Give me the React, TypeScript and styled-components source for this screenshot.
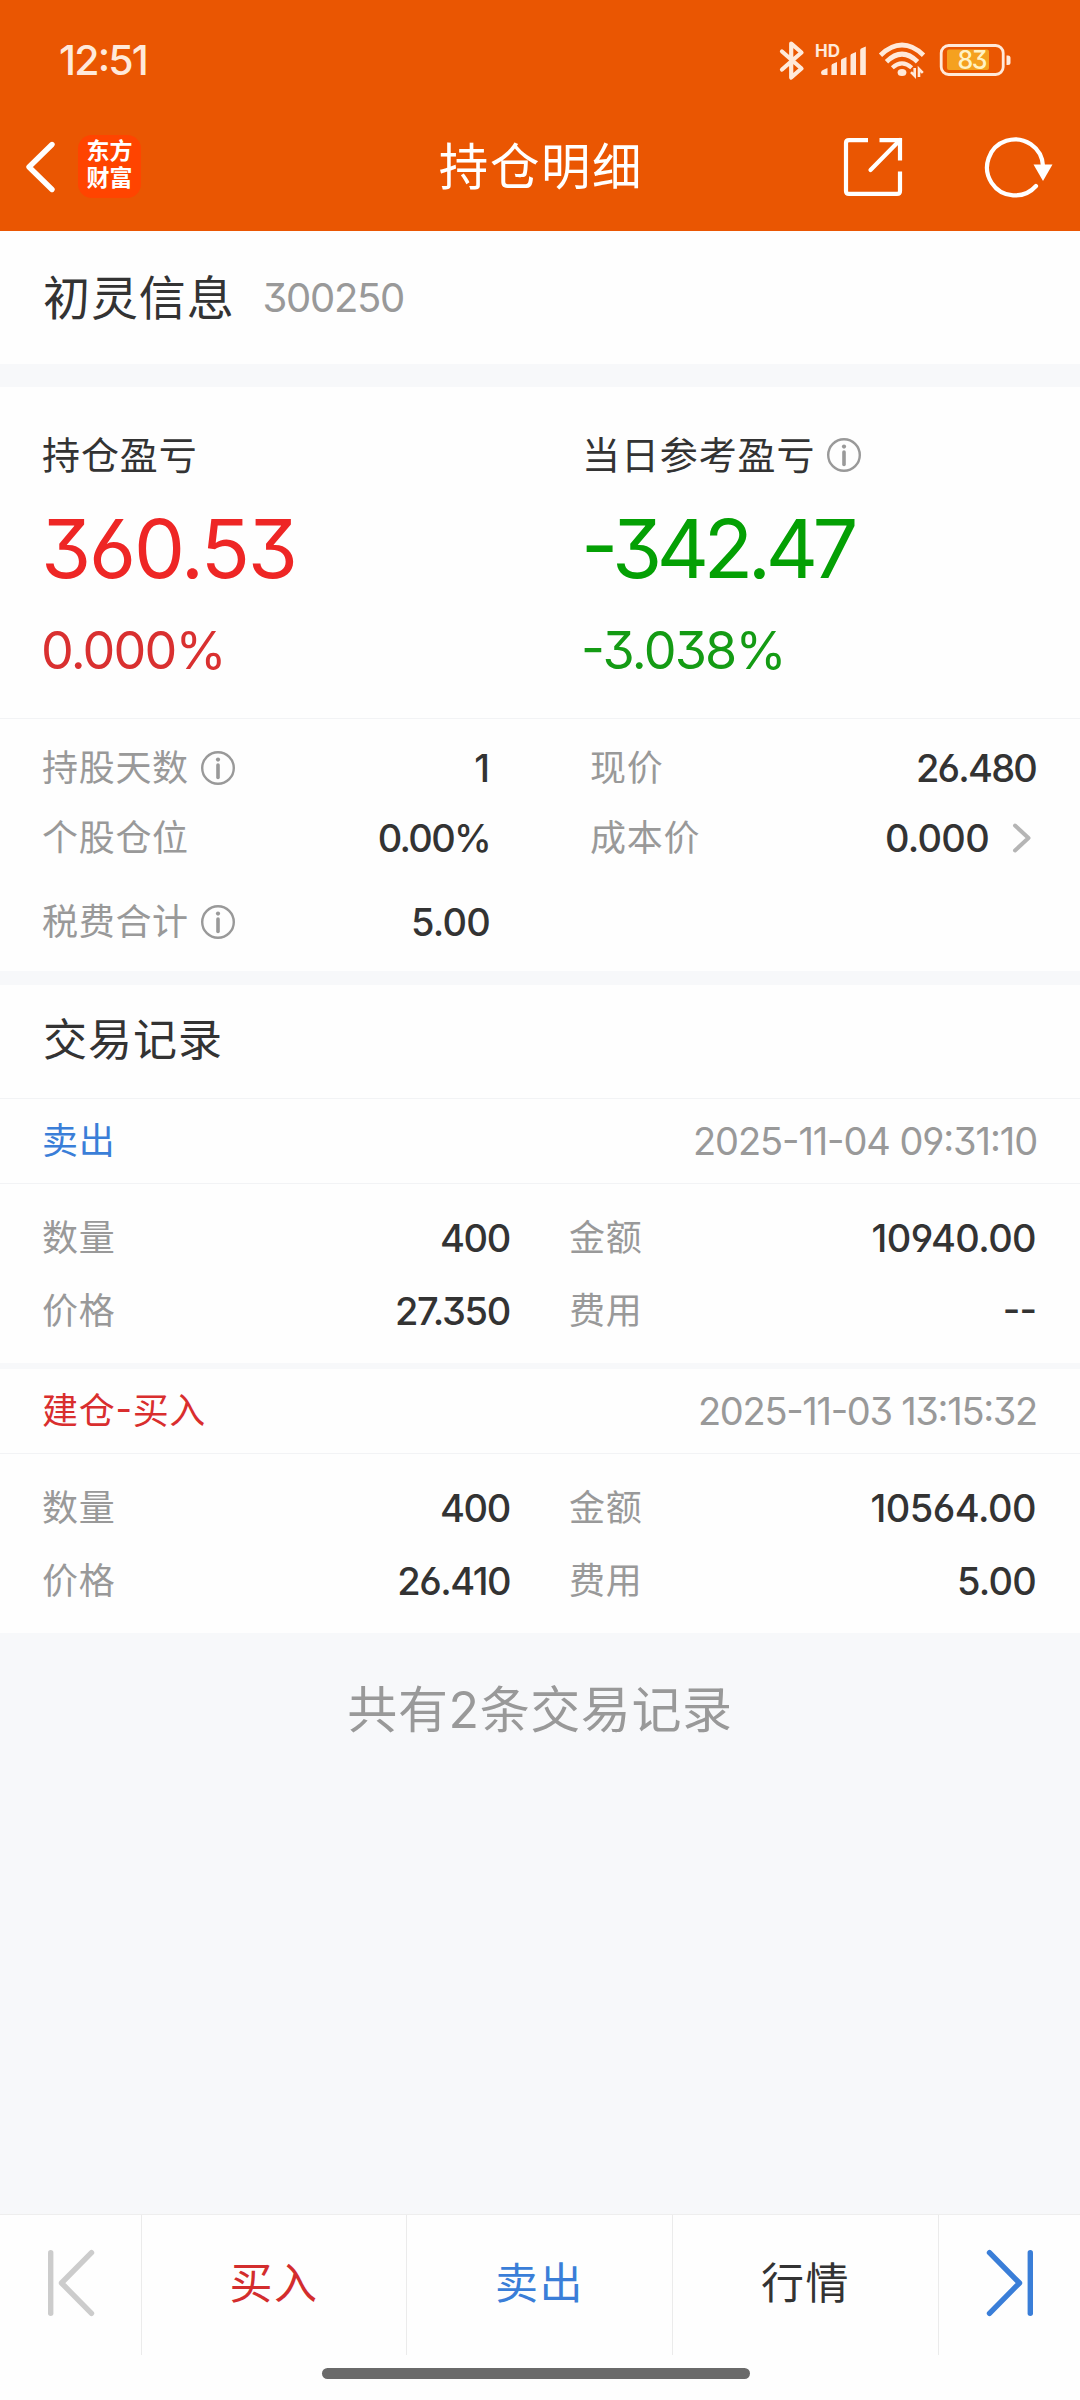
import React from "react";
import styled, { createGlobalStyle } from "styled-components";

const GlobalStyle = createGlobalStyle`
  * { box-sizing: border-box; }
  html, body { margin: 0; padding: 0; background: #f7f8fa; }
  body {
    font-family: Inter, "Noto Sans CJK SC", sans-serif;
    font-feature-settings: "cv03", "cv04", "cv09", "case";
    color: #333;
  }
`;

const Page = styled.div`
  width: 1080px;
  height: 2400px;
  display: flex;
  flex-direction: column;
  background: #f7f8fa;
  overflow: hidden;
`;

const Header = styled.header`
  height: 231px;
  background: #ea5602;
  color: #fff;
`;

const StatusBar = styled.div`
  height: 104px;
  padding: 16px 69px 0 59px;
  display: flex;
  align-items: center;
  justify-content: space-between;
`;

const Clock = styled.span`
  font-size: 41px;
  font-weight: 500;
  line-height: 48px;
  letter-spacing: -1.8px;
  color: #ffe9da;
`;

const StatusIcons = styled.div`
  display: flex;
  align-items: center;
  height: 48px;
`;

const Icon = styled.svg<{ $ml?: number }>`
  display: block;
  flex: none;
  overflow: visible;
  margin-left: ${(p) => p.$ml ?? 0}px;
`;

const NavBar = styled.div`
  height: 125px;
  display: grid;
  grid-template-columns: 1fr auto 1fr;
  align-items: center;
`;

const NavLeft = styled.div`
  display: flex;
  align-items: center;
  padding-left: 25px;
`;

const NavRight = styled.div`
  display: flex;
  align-items: center;
  justify-content: flex-end;
  padding-right: 28px;
`;

const BrandTile = styled.div`
  width: 63px;
  height: 63px;
  margin-left: 22px;
  border-radius: 14px;
  background: #ff4400;
  display: flex;
  flex-direction: column;
  align-items: center;
  justify-content: center;
  font-size: 23px;
  font-weight: 700;
  line-height: 27px;
  padding-bottom: 3px;
`;

const Title = styled.h1`
  margin: 0;
  padding-left: 2px;
  font-size: 49.5px;
  font-weight: 400;
  line-height: 60px;
  letter-spacing: 1.6px;
`;

const Panel = styled.section<{ $h: number; $gap?: number }>`
  height: ${(p) => p.$h}px;
  margin-bottom: ${(p) => p.$gap ?? 0}px;
  background: #fefefe;
  flex: none;
`;

const StockLine = styled(Panel)`
  display: flex;
  align-items: center;
  padding-left: 43px;
`;

const StockName = styled.span`
  font-size: 47px;
  line-height: 56px;
  letter-spacing: 0.9px;
`;

const StockCode = styled.span`
  margin-left: 28px;
  font-size: 40px;
  line-height: 56px;
  letter-spacing: -1.3px;
  color: #999;
`;

const Profits = styled.div`
  height: 332px;
  display: grid;
  grid-template-columns: 540px 540px;
  border-bottom: 1px solid #f2f3f5;
`;

const ProfitCell = styled.div<{ $tone: "up" | "down" }>`
  padding: 42px 0 0 42px;
  color: ${(p) => (p.$tone === "up" ? "#ee2625" : "#04a004")};
`;

const ProfitLabel = styled.div`
  display: flex;
  align-items: center;
  height: 46px;
  font-size: 38px;
  letter-spacing: 0.9px;
  color: #333;
  svg { position: relative; top: 3px; }
`;

const ProfitValue = styled.div<{ $track: number }>`
  margin: 25px 0 0 -1px;
  font-size: 81px;
  line-height: 98px;
  letter-spacing: ${(p) => p.$track}px;
`;

const ProfitRate = styled.div<{ $tone: "up" | "down" }>`
  margin: 23px 0 0 -1px;
  font-size: 52px;
  line-height: 60px;
  letter-spacing: -1.8px;
  color: ${(p) => (p.$tone === "up" ? "#d93030" : "#149b14")};
`;

const Stats = styled.div`
  display: grid;
  grid-template-rows: 70px 70px 98px;
  grid-template-columns: 448px 446px;
  justify-content: space-between;
  padding: 14px 44px 0 42px;
`;

const Pair = styled.div`
  display: flex;
  align-items: center;
  justify-content: space-between;
`;

const Label = styled.span`
  display: flex;
  align-items: center;
  font-size: 36px;
  line-height: 44px;
  letter-spacing: 0.7px;
  color: #999;
`;

const Value = styled.span<{ $track?: number }>`
  display: flex;
  align-items: center;
  font-size: 38px;
  font-weight: 450;
  line-height: 44px;
  letter-spacing: ${(p) => p.$track ?? 0}px;
  color: #333;
`;

const SectionTitle = styled.h2`
  margin: 0;
  height: 114px;
  padding-left: 43px;
  border-bottom: 1px solid #f2f3f5;
  font-size: 44px;
  font-weight: 400;
  line-height: 111px;
  letter-spacing: 1px;
`;

const RecordHead = styled.div<{ $side: "sell" | "buy" }>`
  height: 85px;
  padding: 0 43px 0 42px;
  display: flex;
  align-items: center;
  justify-content: space-between;
  border-bottom: 1px solid #f2f3f5;
  color: ${(p) => (p.$side === "sell" ? "#3a7ed8" : "#d92e2e")};
`;

const Side = styled.span`
  font-size: 36px;
  line-height: 44px;
  letter-spacing: 0.7px;
`;

const Time = styled.time<{ $track: number }>`
  font-size: 38px;
  line-height: 44px;
  letter-spacing: ${(p) => p.$track}px;
  color: #999;
`;

const RecordBody = styled.div`
  height: 179px;
  padding: 17px 44px 0 42px;
  display: grid;
  grid-template-columns: 468px 467px;
  grid-template-rows: 73px 73px;
  justify-content: space-between;
`;

const Summary = styled.p`
  margin: 0;
  flex: 1;
  padding-top: 47px;
  text-align: center;
  font-size: 50px;
  line-height: 60px;
  letter-spacing: 0.6px;
  color: #999;
`;

const Footer = styled.footer`
  height: 186px;
  border-top: 1px solid #eee;
  background: #fefefe;
  display: flex;
  flex-direction: column;
  align-items: center;
`;

const Actions = styled.nav`
  width: 1080px;
  height: 140px;
  display: grid;
  grid-template-columns: 142px 265px 266px 266px 141px;
`;

const Action = styled.div<{ $color: string }>`
  display: flex;
  align-items: center;
  justify-content: center;
  padding-bottom: 4px;
  border-right: 1px solid #ebebeb;
  font-size: 43px;
  line-height: 60px;
  letter-spacing: 1.4px;
  color: ${(p) => p.$color};
  &:last-child { border-right: 0; }
`;

const HomeBar = styled.div`
  width: 428px;
  height: 11px;
  margin: 13px 0 0 -8px;
  border-radius: 6px;
  background: #6a6a6a;
`;

const BatteryText = styled.text`
  font-size: 25px;
  font-weight: 500;
`;

const HdText = styled.text`
  font-size: 17px;
  font-weight: 700;
`;

const cream = "#ffe9da";

const InfoIcon = () => (
  <Icon $ml={12} width="34" height="34" viewBox="0 0 34 34" fill="none" stroke="#999">
    <circle cx="17" cy="17" r="15.8" strokeWidth="2.4" />
    <path d="M17 14v12.5" strokeWidth="3.6" strokeLinecap="round" />
    <circle cx="17" cy="8.6" r="2.1" fill="#999" stroke="none" />
  </Icon>
);

const SkipIcon = ({ color, flip }: { color: string; flip?: boolean }) => (
  <Icon width="46" height="66" viewBox="0 0 46 66" fill="none" stroke={color} strokeWidth="5.4" strokeLinecap="round" strokeLinejoin="round">
    <g transform={flip ? "translate(46 0) scale(-1 1)" : undefined}>
      <path d="M2.7 2.7v60.6" />
      <path d="M43.5 2.7L13.5 33l30 30.3" />
    </g>
  </Icon>
);

interface Row {
  label: string;
  value: string;
  track?: number;
}

interface RecordItem {
  side: "sell" | "buy";
  name: string;
  time: string;
  timeTrack: number;
  rows: Row[];
}

const records: RecordItem[] = [
  {
    side: "sell",
    name: "卖出",
    time: "2025-11-04 09:31:10",
    timeTrack: -1.1,
    rows: [
      { label: "数量", value: "400", track: -1.3 },
      { label: "金额", value: "10940.00", track: -0.6 },
      { label: "价格", value: "27.350", track: -1.3 },
      { label: "费用", value: "--", track: -1 },
    ],
  },
  {
    side: "buy",
    name: "建仓-买入",
    time: "2025-11-03 13:15:32",
    timeTrack: -1.3,
    rows: [
      { label: "数量", value: "400", track: -1.3 },
      { label: "金额", value: "10564.00", track: -0.5 },
      { label: "价格", value: "26.410", track: -1.5 },
      { label: "费用", value: "5.00", track: -0.8 },
    ],
  },
];

export default function App() {
  return (
    <>
      <GlobalStyle />
      <Page>
        <Header>
          <StatusBar>
            <Clock>12:51</Clock>
            <StatusIcons>
              <Icon width="24" height="39" viewBox="0 0 24 39" fill="none" stroke={cream} strokeWidth="4.2" strokeLinejoin="round" strokeLinecap="round">
                <path d="M2 10.5L21.5 27.5 11.2 36.5V2.5L21.5 11.5 2 28.5" />
              </Icon>
              <Icon $ml={12} width="50" height="32" viewBox="0 0 50 32" fill={cream}>
                <HdText x="-1" y="13" textLength="25">HD</HdText>
                <path d="M5 28.5q0-2 3-3l3.5-1.5V31H7q-2 0-2-2.500z" />
                <path d="M15.500 31v-9.500q0-1.500 2-2l3.500-1.500v13z" />
                <path d="M25 31V16.500q0-1.500 2-2l3.500-1.500v18z" />
                <path d="M34.500 31V11.500q0-1.500 2-2L40 8v23z" />
                <path d="M44.200 31V6q0-1.500 2-2l3.600-1.500V31z" />
              </Icon>
              <Icon $ml={13} width="46" height="34" viewBox="0 0 46 34" fill="none" stroke={cream} strokeWidth="4.800">
                <path d="M1.500 12.200Q23-8 44.500 12.200" />
                <path d="M7.500 18.700Q23 3.500 38.500 18.700" />
                <path d="M13.300 24.700Q23 16 32.700 24.700" strokeWidth="4.200" />
                <ellipse cx="23" cy="29.500" rx="4.400" ry="3.500" fill={cream} stroke="none" />
                <path d="M32 29.200l3.700 3.700V25M40 34v-8l3.800 3.800" strokeWidth="2.600" />
              </Icon>
              <Icon $ml={15} width="71" height="32" viewBox="0 0 71 32">
                <rect x="1.200" y="1.500" width="62" height="29" rx="7.500" fill="none" stroke={cream} strokeWidth="2.800" />
                <rect x="7" y="5.500" width="42" height="20.500" rx="2" fill="#f5a11f" />
                <path d="M66.500 11.500h1.500q2.500 0 2.500 2.500v4.500q0 2.500-2.500 2.500h-1.500z" fill={cream} />
                <BatteryText x="17.500" y="25" textLength="30" fill="#fff3c4">83</BatteryText>
              </Icon>
            </StatusIcons>
          </StatusBar>
          <NavBar>
            <NavLeft>
              <Icon width="31" height="52" viewBox="0 0 31 52" fill="none" stroke="#fff" strokeWidth="5.400" strokeLinecap="round" strokeLinejoin="round">
                <path d="M27 3.500L4 26l23 22.500" />
              </Icon>
              <BrandTile>
                <span>东方</span>
                <span>财富</span>
              </BrandTile>
            </NavLeft>
            <Title>持仓明细</Title>
            <NavRight>
              <Icon width="58" height="58" viewBox="0 0 58 58" fill="none" stroke="#fff" strokeWidth="4.200">
                <path d="M24 2.100H5q-3 0-3 3v47.800q0 3 3 3h48q3 0 3-3V33.500" />
                <path d="M35.500 2.100H56V22.500" />
                <path d="M56 2L26.500 32" strokeLinecap="round" />
              </Icon>
              <Icon $ml={83} width="67" height="60" viewBox="0 0 67 60" fill="none" stroke="#fff" strokeWidth="4.200">
                <path d="M51 49A28 28 0 1 1 58 29" strokeLinecap="round" />
                <path d="M48.500 27.500h19L58 44z" fill="#fff" stroke="none" />
              </Icon>
            </NavRight>
          </NavBar>
        </Header>

        <StockLine $h={133} $gap={23}>
          <StockName>初灵信息</StockName>
          <StockCode>300250</StockCode>
        </StockLine>

        <Panel $h={584} $gap={14}>
          <Profits>
            <ProfitCell $tone="up">
              <ProfitLabel>持仓盈亏</ProfitLabel>
              <ProfitValue $track={-2.2}>360.53</ProfitValue>
              <ProfitRate $tone="up">0.000%</ProfitRate>
            </ProfitCell>
            <ProfitCell $tone="down">
              <ProfitLabel>
                当日参考盈亏
                <InfoIcon />
              </ProfitLabel>
              <ProfitValue $track={-5.4}>-342.47</ProfitValue>
              <ProfitRate $tone="down">-3.038%</ProfitRate>
            </ProfitCell>
          </Profits>
          <Stats>
            <Pair>
              <Label>持股天数<InfoIcon /></Label>
              <Value>1</Value>
            </Pair>
            <Pair>
              <Label>现价</Label>
              <Value $track={-1.8}>26.480</Value>
            </Pair>
            <Pair>
              <Label>个股仓位</Label>
              <Value $track={-1.7}>0.00%</Value>
            </Pair>
            <Pair>
              <Label>成本价</Label>
              <Value $track={-0.7}>
                0.000
                <Icon $ml={23} width="24" height="30" viewBox="0 0 24 30" fill="none" stroke="#b5b5b5" strokeWidth="4" strokeLinecap="round" strokeLinejoin="round">
                  <path d="M3 2.500L16.500 15 3 27.500" />
                </Icon>
              </Value>
            </Pair>
            <Pair>
              <Label>税费合计<InfoIcon /></Label>
              <Value $track={-0.8}>5.00</Value>
            </Pair>
          </Stats>
        </Panel>

        <Panel $h={378} $gap={6}>
          <SectionTitle>交易记录</SectionTitle>
          <Record item={records[0]} />
        </Panel>
        <Panel $h={264}>
          <Record item={records[1]} />
        </Panel>

        <Summary>共有2条交易记录</Summary>

        <Footer>
          <Actions>
            <Action $color="#ccc"><SkipIcon color="#ccc" /></Action>
            <Action $color="#d32d2d">买入</Action>
            <Action $color="#3a7ed8">卖出</Action>
            <Action $color="#333">行情</Action>
            <Action $color="#3a7ed8"><SkipIcon color="#3a7ed8" flip /></Action>
          </Actions>
          <HomeBar />
        </Footer>
      </Page>
    </>
  );
}

function Record({ item }: { item: RecordItem }) {
  return (
    <>
      <RecordHead $side={item.side}>
        <Side>{item.name}</Side>
        <Time $track={item.timeTrack}>{item.time}</Time>
      </RecordHead>
      <RecordBody>
        {item.rows.map((row) => (
          <Pair key={row.label}>
            <Label>{row.label}</Label>
            <Value $track={row.track}>{row.value}</Value>
          </Pair>
        ))}
      </RecordBody>
    </>
  );
}
